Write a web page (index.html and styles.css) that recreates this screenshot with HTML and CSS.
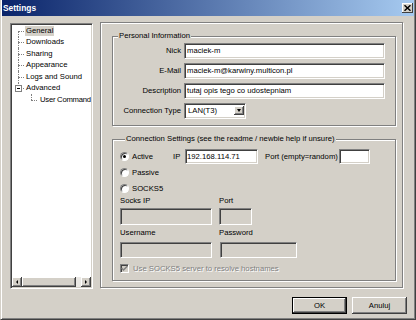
FILE: index.html
```html
<!DOCTYPE html>
<html lang="pl">
<head>
  <meta charset="UTF-8">
  <title>Settings</title>
  <link rel="stylesheet" href="styles.css">
</head>
<body>
  <div class="window">
    <div class="titlebar">
      <span class="title">Settings</span>
      <span class="close-btn">
        <svg width="7" height="6" viewBox="0 0 7 6"><path d="M0.5 0.3 L6.5 5.7 M6.5 0.3 L0.5 5.7" stroke="#000" stroke-width="1.5"/></svg>
      </span>
    </div>

    <div class="main">
      <div class="tree">
        <ul class="tree-list">
          <li class="first"><span class="item sel">General</span></li>
          <li><span class="item">Downloads</span></li>
          <li><span class="item">Sharing</span></li>
          <li><span class="item">Appearance</span></li>
          <li><span class="item">Logs and Sound</span></li>
          <li class="last"><span class="expander"></span><span class="item">Advanced</span></li>
          <li class="child"><span class="item">User Command</span></li>
        </ul>
        <div class="hscroll">
          <span class="sb-btn"><span class="arr-left"></span></span>
          <span class="sb-thumb"></span>
          <span class="sb-track"></span>
          <span class="sb-btn"><span class="arr-right"></span></span>
        </div>
      </div>

      <div class="page">
        <div class="group personal">
          <div class="caption">Personal Information</div>
          <div class="form-grid">
            <span class="lbl">Nick</span>
            <div class="edit">maciek-m</div>
            <span class="lbl">E-Mail</span>
            <div class="edit">maciek-m@karwiny.multicon.pl</div>
            <span class="lbl">Description</span>
            <div class="edit">tutaj opis tego co udostepniam</div>
            <span class="lbl">Connection Type</span>
            <div class="combo">
              <span class="combo-text">LAN(T3)</span>
              <span class="drop-btn"><span class="arr-down"></span></span>
            </div>
          </div>
        </div>

        <div class="group conn">
          <div class="caption">Connection Settings (see the readme / newbie help if unsure)</div>
          <div class="opt-row first-row">
            <span class="opt"><span class="radio on"></span>Active</span>
            <span class="ip-label">IP</span>
            <div class="edit ip">192.168.114.71</div>
            <span class="port-label">Port (empty=random)</span>
            <div class="edit port"></div>
          </div>
          <div class="opt-row">
            <span class="opt"><span class="radio"></span>Passive</span>
          </div>
          <div class="opt-row">
            <span class="opt"><span class="radio"></span>SOCKS5</span>
          </div>

          <div class="pair labels">
            <span>Socks IP</span><span>Port</span>
          </div>
          <div class="pair inputs tall">
            <div class="edit off"></div><div class="edit off sport"></div>
          </div>
          <div class="pair labels second">
            <span>Username</span><span>Password</span>
          </div>
          <div class="pair inputs lower">
            <div class="edit off"></div><div class="edit off pass"></div>
          </div>

          <div class="check-row">
            <span class="check">
              <svg width="7" height="7" viewBox="0 0 7 7"><path d="M0.5 3 L2.5 5 L6.5 1" fill="none" stroke="#808080" stroke-width="1.5"/></svg>
            </span>
            <span class="disabled">Use SOCKS5 server to resolve hostnames</span>
          </div>
        </div>
      </div>
    </div>

    <div class="buttons">
      <button class="btn default">OK</button>
      <button class="btn">Anuluj</button>
    </div>
  </div>
</body>
</html>
```

FILE: styles.css
```css
* {
  box-sizing: border-box;
}
body {
  margin: 0;
  background: #d4d0c8;
  font-family: "Liberation Sans", Arial, sans-serif;
  font-size: 7.7px;
  color: #000;
}
.window {
  width: 416px;
  height: 320px;
  background: #d4d0c8;
  border-left: 1px solid #d4d0c8;
  border-right: 1px solid #404040;
  border-bottom: 1px solid #404040;
  box-shadow: inset 1px 0 #fff, inset -1px -1px #808080;
  display: flex;
  flex-direction: column;
}

/* title bar */
.titlebar {
  height: 16px;
  margin: 0 1px;
  padding: 0 1px;
  background: linear-gradient(to right, #0a246a, #a6caf0);
  display: flex;
  align-items: center;
  color: #fff;
}
.title {
  font-weight: bold;
  font-size: 8.4px;
}
.close-btn {
  margin-left: auto;
  width: 11px;
  height: 10px;
  background: #d4d0c8;
  box-shadow: inset -1px -1px #404040, inset 1px 1px #fff;
  display: flex;
  align-items: center;
  justify-content: center;
}
.close-btn svg {
  display: block;
}

.main {
  display: flex;
  align-items: flex-start;
  padding: 6px 0 0 9px;
}

/* tree on the left */
.tree {
  margin-top: 1px;
  width: 83px;
  height: 266px;
  padding: 1px;
  background: #fff;
  border: 1px solid;
  border-color: #808080 #fff #fff #808080;
  box-shadow: inset 1px 1px #404040, inset -1px -1px #d4d0c8;
  display: flex;
  flex-direction: column;
  overflow: hidden;
}
.tree-list {
  list-style: none;
  margin: 0;
  padding: 0;
  flex: 1;
  overflow: hidden;
}
.tree-list li {
  position: relative;
  height: 11.5px;
  display: flex;
  align-items: center;
  padding-left: 13px;
  white-space: nowrap;
}
.tree-list li::before {
  content: "";
  position: absolute;
  left: 6px;
  width: 6px;
  top: 50%;
  border-top: 1px dotted #808080;
}
.tree-list li::after {
  content: "";
  position: absolute;
  left: 6px;
  top: 0;
  bottom: 0;
  border-left: 1px dotted #808080;
}
.tree-list li.first::after {
  top: 50%;
}
.tree-list li.last::after {
  bottom: 50%;
}
.tree-list li.child {
  padding-left: 27px;
  letter-spacing: -0.25px;
}
.tree-list li.child::before {
  left: 19px;
  width: 6px;
}
.tree-list li.child::after {
  left: 19px;
  bottom: 50%;
}
.item {
  padding: 0 1px;
  line-height: 10px;
}
.item.sel {
  background: #d4d0c8;
}
.expander {
  position: absolute;
  z-index: 1;
  left: 3px;
  top: calc(50% - 3px);
  width: 7px;
  height: 7px;
  background: #fff;
  border: 1px solid #808080;
  display: flex;
  align-items: center;
  justify-content: center;
}
.expander::after {
  content: "";
  width: 3px;
  border-top: 1px solid #000;
}

.hscroll {
  height: 10px;
  display: flex;
}
.sb-btn,
.sb-thumb {
  background: #d4d0c8;
  box-shadow: inset -1px -1px #404040, inset 1px 1px #fff, inset -2px -2px #808080;
}
.sb-btn {
  width: 10px;
  display: flex;
  align-items: center;
  justify-content: center;
}
.sb-thumb {
  width: 54px;
}
.sb-track {
  flex: 1;
  background: #ebe9e5;
}
.arr-left {
  border-right: 2px solid #000;
  border-top: 2px solid transparent;
  border-bottom: 2px solid transparent;
}
.arr-right {
  border-left: 2px solid #000;
  border-top: 2px solid transparent;
  border-bottom: 2px solid transparent;
}

/* property page */
.page {
  margin-left: 7px;
  width: 303px;
  height: 266px;
  padding: 13px 0 0 11px;
  border: 1px solid #808080;
  box-shadow: inset 1px 1px #fff, 1px 1px #fff;
}
.group {
  width: 284px;
  border: 1px solid #808080;
  box-shadow: inset 1px 1px #fff, 1px 1px #fff;
}
.caption {
  width: fit-content;
  margin: -6px 0 0 5px;
  padding: 0 1px;
  line-height: 10px;
  background: #d4d0c8;
  white-space: nowrap;
}
.personal {
  padding-bottom: 6.5px;
}
.form-grid {
  margin-top: 2px;
  display: grid;
  grid-template-columns: 68px 201px;
  grid-auto-rows: 15.5px;
  column-gap: 3px;
  row-gap: 4.5px;
  align-items: center;
}
.lbl {
  text-align: right;
  white-space: nowrap;
}
.edit {
  height: 100%;
  padding: 0 2px;
  background: #fff;
  border: 1px solid;
  border-color: #808080 #fff #fff #808080;
  box-shadow: inset 1px 1px #404040, inset -1px -1px #d4d0c8;
  display: flex;
  align-items: center;
  white-space: nowrap;
  overflow: hidden;
}
.edit.off {
  background: #d4d0c8;
}
.combo {
  width: 62px;
  height: 100%;
  padding: 2px;
  background: #fff;
  border: 1px solid;
  border-color: #808080 #fff #fff #808080;
  box-shadow: inset 1px 1px #404040, inset -1px -1px #d4d0c8;
  display: flex;
  align-items: center;
}
.combo-text {
  flex: 1;
  padding-left: 1px;
}
.drop-btn {
  width: 10px;
  height: 100%;
  margin-top: -1px;
  margin-right: -1px;
  background: #d4d0c8;
  box-shadow: inset -1px -1px #404040, inset 1px 1px #fff, inset -2px -2px #808080;
  display: flex;
  align-items: center;
  justify-content: center;
}
.arr-down {
  border-top: 3px solid #000;
  border-left: 2.5px solid transparent;
  border-right: 2.5px solid transparent;
}

.conn {
  margin-top: 13px;
  padding: 0 0 7px 7px;
}
.opt-row {
  height: 16px;
  display: flex;
  align-items: center;
}
.opt-row.first-row {
  margin-top: 4px;
}
.opt {
  width: 53px;
  display: flex;
  align-items: center;
}
.radio {
  width: 9px;
  height: 9px;
  margin-right: 3px;
  border-radius: 50%;
  background: #fff;
  border: 1px solid;
  border-color: #808080 #fff #fff #808080;
  box-shadow: inset 1px 1px #404040;
  display: flex;
  align-items: center;
  justify-content: center;
}
.radio.on::after {
  content: "";
  width: 3px;
  height: 3px;
  border-radius: 50%;
  background: #000;
}
.ip-label {
  width: 12px;
}
.edit.ip {
  width: 73px;
  height: 15px;
  padding: 0 1px;
}
.port-label {
  margin-left: 7px;
  width: 74px;
  white-space: nowrap;
}
.edit.port {
  width: 31px;
  height: 15px;
}

.pair {
  display: grid;
  grid-template-columns: 92px auto;
  column-gap: 7px;
  justify-items: start;
}
.pair.labels {
  line-height: 10px;
}
.pair.labels.second {
  margin-top: 2.5px;
}
.pair.inputs.tall {
  margin-top: 2px;
  height: 17px;
}
.pair.inputs.lower {
  margin-top: 4.5px;
  height: 16px;
}
.pair .edit {
  width: 100%;
}
.pair .edit.sport {
  width: 33px;
}
.pair .edit.pass {
  width: 77px;
  margin-left: 1px;
}

.check-row {
  margin-top: 5px;
  height: 10px;
  display: flex;
  align-items: center;
}
.check {
  width: 9px;
  height: 9px;
  margin-right: 4px;
  background: #d4d0c8;
  border: 1px solid;
  border-color: #808080 #fff #fff #808080;
  box-shadow: inset 1px 1px #404040;
  display: flex;
  align-items: center;
  justify-content: center;
}
.check svg {
  display: block;
}
.disabled {
  color: #808080;
  text-shadow: 1px 1px #fff;
  white-space: nowrap;
}

/* dialog buttons */
.buttons {
  margin-top: 8px;
  padding-right: 8px;
  display: flex;
  justify-content: flex-end;
  gap: 5px;
}
.btn {
  width: 55px;
  height: 17px;
  padding: 0;
  font: inherit;
  color: #000;
  background: #d4d0c8;
  border: none;
  box-shadow: inset -1px -1px #404040, inset 1px 1px #fff, inset -2px -2px #808080;
}
.btn.default {
  border: 1px solid #000;
}
```
